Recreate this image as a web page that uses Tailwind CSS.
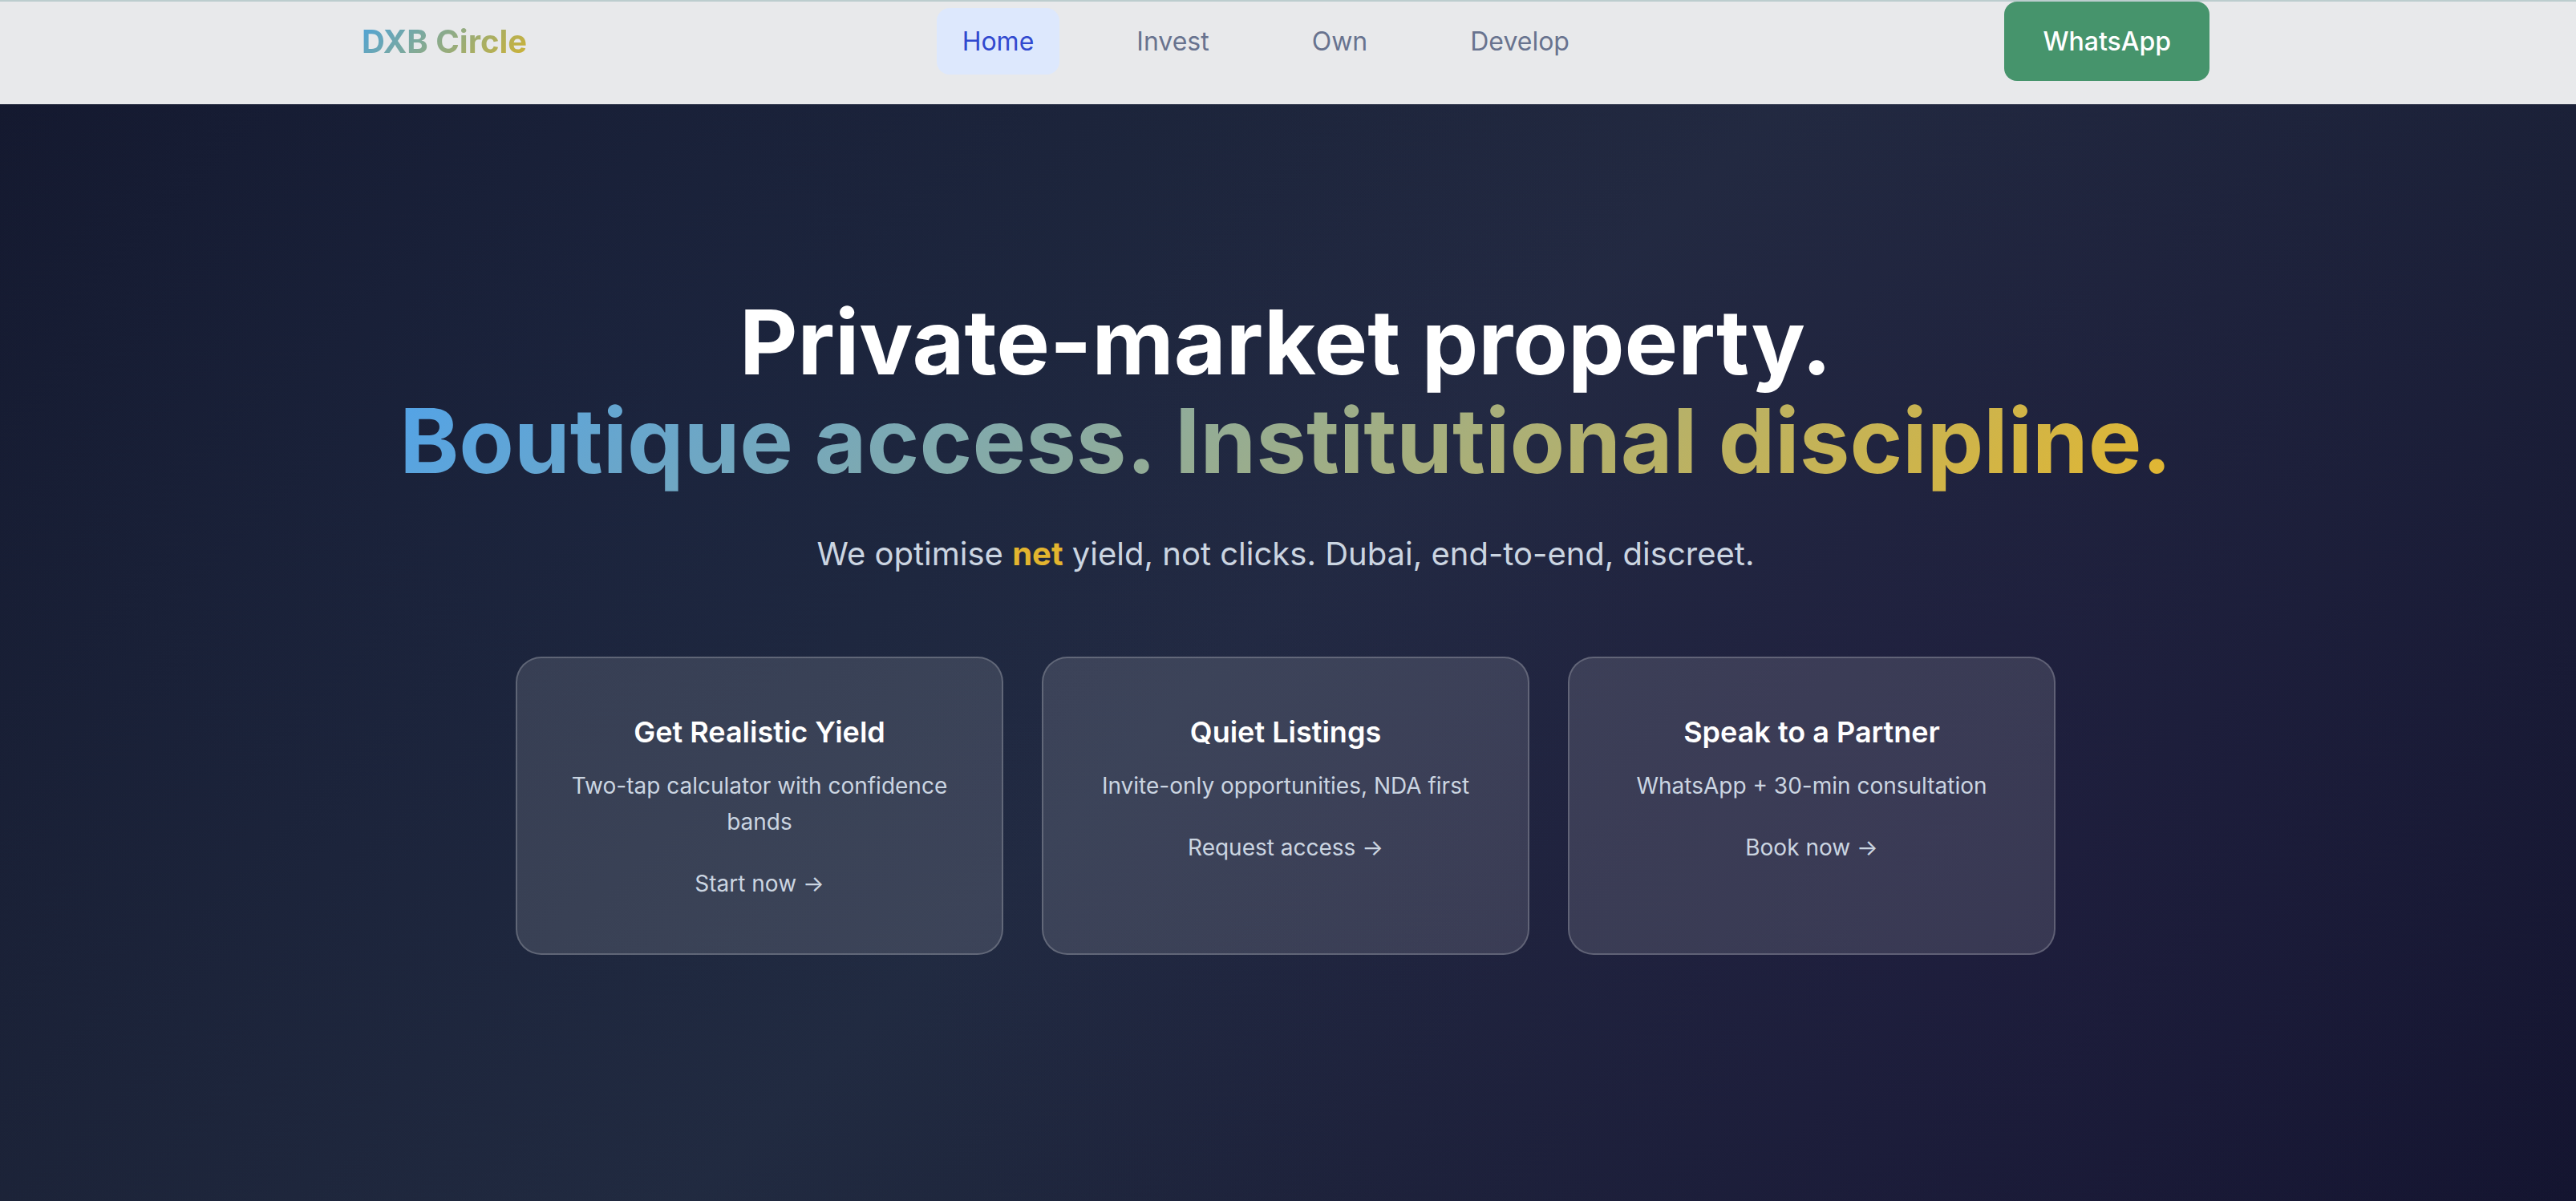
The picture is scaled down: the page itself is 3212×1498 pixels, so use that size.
<!DOCTYPE html>
<html lang="en">
<head>
<meta charset="utf-8">
<meta name="viewport" content="width=device-width, initial-scale=1">
<title>DXB Circle</title>
<script src="https://cdn.jsdelivr.net/npm/@tailwindcss/browser@4"></script>
</head>
<body class="min-h-screen bg-[#1a2036] font-['Inter',sans-serif] text-[28px] leading-[45px] text-[#cbd5e1]">
<div class="min-h-screen bg-[radial-gradient(circle_at_25%_35%,rgba(30,50,100,0.14)_0%,transparent_50%),radial-gradient(circle_at_75%_70%,rgba(50,30,90,0.22)_0%,transparent_50%),linear-gradient(135deg,#13172c_0%,#212a3f_50%,#12142d_100%)]">

  <header class="border-t-2 border-[#bccdce] bg-[#e8e9eb] pr-1.5 pb-[29px]">
    <div class="mx-auto flex max-w-[2304px] items-center justify-between">
      <a href="#" class="bg-[linear-gradient(135deg,#4aa3df,#d4b32c)] bg-clip-text text-[40px] leading-[64px] font-bold text-transparent">DXB Circle</a>
      <nav class="flex items-center gap-16 text-[32px] leading-[51px] text-[#68738f]">
        <a href="#" class="rounded-2xl bg-[#dde8fd] px-8 py-4 text-[#3149cf]">Home</a>
        <a href="#" class="px-8 py-4">Invest</a>
        <a href="#" class="px-8 py-4">Own</a>
        <a href="#" class="px-8 py-4">Develop</a>
      </nav>
      <a href="#" class="rounded-2xl bg-[#46946c] px-12 py-6 text-[32px] leading-[51px] font-medium text-white">WhatsApp</a>
    </div>
  </header>

  <main class="pt-[235px] pr-1.5 pb-[235px] text-center">
    <h1 class="text-[112px] leading-[123px] font-bold text-white">
      Private-market property.<br>
      <span class="bg-[linear-gradient(135deg,#52a3e8,#e3b730)] bg-clip-text text-transparent">Boutique access. Institutional discipline.</span>
    </h1>
    <p class="mt-12 text-[40px] leading-[64px]">We optimise <strong class="font-bold text-[#e3b52f]">net</strong> yield, not clicks. Dubai, end-to-end, discreet.</p>

    <section class="mx-auto mt-24 grid max-w-[1920px] grid-cols-3 gap-12">
      <article class="rounded-[32px] border-2 border-white/20 bg-white/12 p-16">
        <h2 class="text-[36px] leading-[57px] font-semibold text-white">Get Realistic Yield</h2>
        <p class="mt-4">Two-tap calculator with confidence bands</p>
        <a href="#" class="mt-8 block">Start now →</a>
      </article>
      <article class="rounded-[32px] border-2 border-white/20 bg-white/12 p-16">
        <h2 class="text-[36px] leading-[57px] font-semibold text-white">Quiet Listings</h2>
        <p class="mt-4">Invite-only opportunities, NDA first</p>
        <a href="#" class="mt-8 block">Request access →</a>
      </article>
      <article class="rounded-[32px] border-2 border-white/20 bg-white/12 p-16">
        <h2 class="text-[36px] leading-[57px] font-semibold text-white">Speak to a Partner</h2>
        <p class="mt-4">WhatsApp + 30-min consultation</p>
        <a href="#" class="mt-8 block">Book now →</a>
      </article>
    </section>
  </main>
</div>
</body>
</html>
